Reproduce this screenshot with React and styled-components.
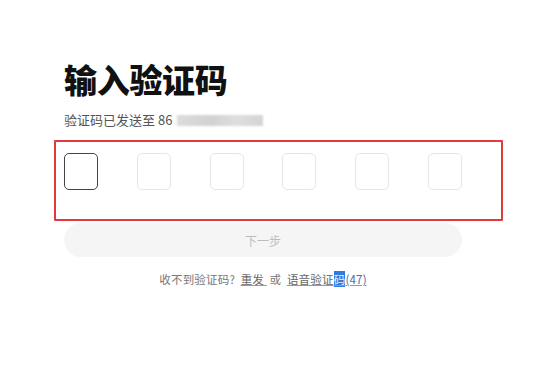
import React from 'react';
import styled, { createGlobalStyle } from 'styled-components';

const Global = createGlobalStyle`
  html, body {
    margin: 0;
    padding: 0;
    background: #fff;
  }
  body {
    font-family: "Noto Sans CJK SC", "Noto Sans", sans-serif;
    color: #222;
  }
`;

const Page = styled.div`
  width: 555px;
  height: 384px;
  box-sizing: border-box;
  padding: 59px 93px 0 64px;
`;

const Title = styled.h1`
  margin: 0;
  font-size: 33px;
  line-height: 40px;
  font-weight: 900;
  color: #111;
  letter-spacing: -0.3px;
`;

const Sub = styled.div`
  margin-top: 12px;
  display: flex;
  align-items: center;
  gap: 5px;
  font-size: 13px;
  line-height: 18px;
  color: #555;
`;

const Masked = styled.span`
  display: inline-block;
  width: 86px;
  height: 11px;
  background: linear-gradient(90deg, #dcdcdc, #d2d2d2 40%, #dedede 70%, #d4d4d4);
  filter: blur(0.8px);
`;

const Frame = styled.div`
  margin: 11px -41px 0 -10px;
  border: 2px solid #e2393c;
  border-radius: 1px;
  padding: 11px 39px 29px 8px;
`;

const Codes = styled.div`
  display: flex;
  justify-content: space-between;
`;

const Cell = styled.div`
  width: 34px;
  height: 37px;
  box-sizing: border-box;
  border-radius: 5px;
  border: ${({ active }) => (active ? '1.5px solid #444' : '1px solid #e6e6e6')};
`;

const NextButton = styled.button`
  display: block;
  width: 398px;
  height: 34px;
  margin-top: 2px;
  border: none;
  border-radius: 17px;
  background: #f5f5f5;
  color: #bdbdbd;
  font-family: inherit;
  font-size: 12px;
`;

const Help = styled.p`
  margin: 15px 0 0;
  width: 398px;
  text-align: center;
  font-size: 11.5px;
  letter-spacing: 0.2px;
  line-height: 14px;
  color: #777;
`;

const Link = styled.span`
  color: #666;
  text-decoration: underline;
  text-decoration-color: #999;
`;

const Selected = styled.span`
  background: #2f7be0;
  color: #e8f0ff;
`;

const Count = styled.span`
  color: #4b6da8;
`;

export default function App() {
  return (
    <Page>
      <Global />
      <Title>输入验证码</Title>
      <Sub>
        <span>验证码已发送至 86</span>
        <Masked />
      </Sub>
      <Frame>
        <Codes>
          {[0, 1, 2, 3, 4, 5].map((i) => (
            <Cell key={i} active={i === 0} />
          ))}
        </Codes>
      </Frame>
      <NextButton>下一步</NextButton>
      <Help>
        收不到验证码?&nbsp;&nbsp;<Link>重发&nbsp;</Link>&nbsp;或&nbsp;&nbsp;<Link>语音验证<Selected>码</Selected><Count>(47)</Count></Link>
      </Help>
    </Page>
  );
}
